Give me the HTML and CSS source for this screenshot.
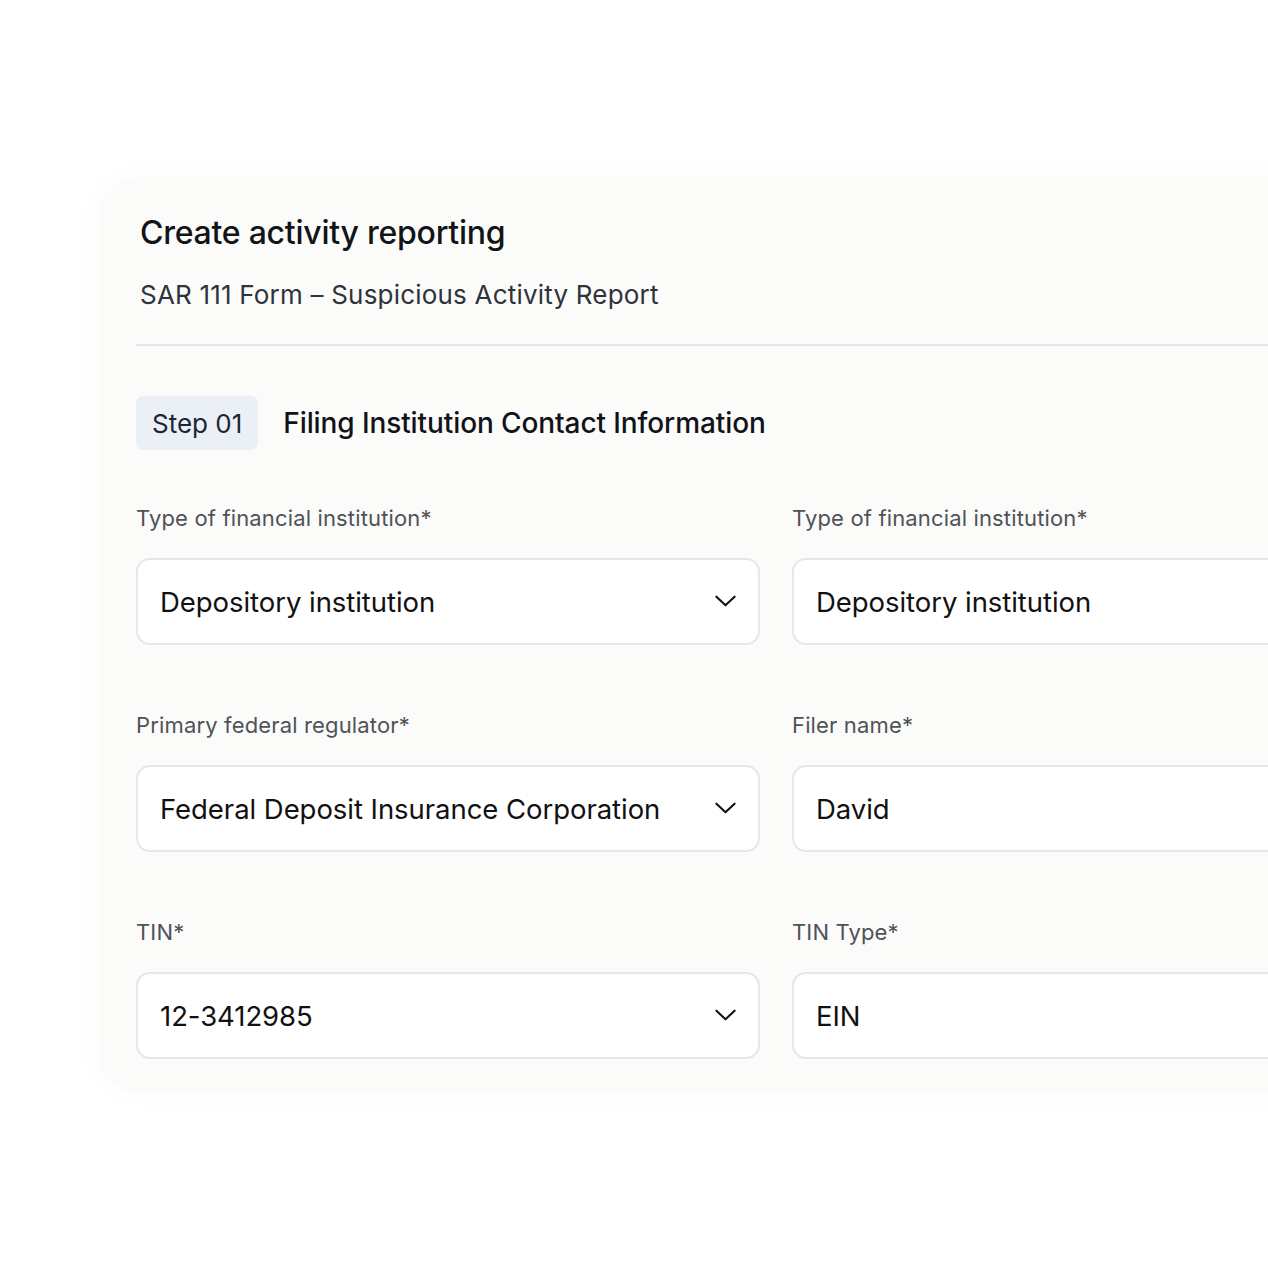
FILE: index.html
```html
<!DOCTYPE html>
<html lang="en">
<head>
<meta charset="utf-8">
<title>Create activity reporting</title>
<link rel="stylesheet" href="styles.css">
</head>
<body>
<div class="page">
  <div class="card">
    <h1 class="title">Create activity reporting</h1>
    <p class="subtitle">SAR 111 Form – Suspicious Activity Report</p>
    <div class="divider"></div>
    <div class="step-row">
      <span class="step-badge">Step 01</span>
      <h2 class="step-title">Filing Institution Contact Information</h2>
    </div>
    <div class="form-grid">
      <div class="field">
        <label class="label">Type of financial institution*</label>
        <div class="input">
          <span class="value">Depository institution</span>
          <svg class="chev" viewBox="0 0 22 12" width="21" height="12"><path d="M1.5 1.5 L11 10.5 L20.5 1.5" fill="none" stroke="#111" stroke-width="2.2" stroke-linecap="round" stroke-linejoin="round"/></svg>
        </div>
      </div>
      <div class="field">
        <label class="label">Type of financial institution*</label>
        <div class="input">
          <span class="value">Depository institution</span>
        </div>
      </div>
      <div class="field">
        <label class="label">Primary federal regulator*</label>
        <div class="input">
          <span class="value">Federal Deposit Insurance Corporation</span>
          <svg class="chev" viewBox="0 0 22 12" width="21" height="12"><path d="M1.5 1.5 L11 10.5 L20.5 1.5" fill="none" stroke="#111" stroke-width="2.2" stroke-linecap="round" stroke-linejoin="round"/></svg>
        </div>
      </div>
      <div class="field">
        <label class="label">Filer name*</label>
        <div class="input">
          <span class="value">David</span>
        </div>
      </div>
      <div class="field">
        <label class="label">TIN*</label>
        <div class="input">
          <span class="value">12-3412985</span>
          <svg class="chev" viewBox="0 0 22 12" width="21" height="12"><path d="M1.5 1.5 L11 10.5 L20.5 1.5" fill="none" stroke="#111" stroke-width="2.2" stroke-linecap="round" stroke-linejoin="round"/></svg>
        </div>
      </div>
      <div class="field">
        <label class="label">TIN Type*</label>
        <div class="input">
          <span class="value">EIN</span>
        </div>
      </div>
    </div>
  </div>
</div>
</body>
</html>
```

FILE: styles.css
```css
html, body {
  margin: 0;
  padding: 0;
  background: #ffffff;
  overflow: hidden;
  width: 1268px;
  height: 1268px;
}

body {
  font-family: Inter, "Noto Sans", "Liberation Sans", sans-serif;
  color: #111111;
}

.page {
  padding-top: 178px;
  padding-left: 98px;
}

.card {
  width: 1400px;
  box-sizing: border-box;
  background: #fbfbfa;
  border-radius: 40px 0 0 40px;
  box-shadow: 0 0 30px 6px #fcfcfb;
  padding: 37px 0 33px 38px;
}

.title {
  margin: 0;
  padding-left: 4px;
  font-size: 32px;
  line-height: 36px;
  font-weight: 500;
  letter-spacing: -0.25px;
  color: #121417;
}

.subtitle {
  margin: 28px 0 0;
  padding-left: 4px;
  font-size: 26px;
  line-height: 32px;
  font-weight: 400;
  letter-spacing: 0.2px;
  color: #2f333b;
}

.divider {
  margin-top: 33px;
  height: 2px;
  background: #e6e6e6;
}

.step-row {
  margin-top: 50px;
  display: flex;
  align-items: center;
  gap: 25px;
}

.step-badge {
  display: flex;
  align-items: center;
  height: 54px;
  padding: 0 16px;
  border-radius: 7px;
  background: #ebf0f7;
  font-size: 26px;
  color: #1d2634;
}

.step-title {
  margin: 0;
  font-size: 28px;
  line-height: 36px;
  font-weight: 500;
  letter-spacing: -0.1px;
  color: #111318;
}

.form-grid {
  margin-top: 54px;
  display: grid;
  grid-template-columns: 624px 624px;
  column-gap: 32px;
  row-gap: 66px;
}

.field {
  display: flex;
  flex-direction: column;
  gap: 26px;
}

.label {
  font-size: 22px;
  line-height: 28px;
  letter-spacing: 0.15px;
  color: #4f5359;
}

.input {
  height: 87px;
  box-sizing: border-box;
  border: 2px solid #e7e7e7;
  border-radius: 14px;
  background: #ffffff;
  display: flex;
  align-items: center;
  justify-content: space-between;
  padding: 0 22px 0 22px;
}

.value {
  font-size: 27.5px;
  letter-spacing: -0.05px;
  color: #111111;
}

.chev {
  display: block;
  margin-top: -2px;
}
```
